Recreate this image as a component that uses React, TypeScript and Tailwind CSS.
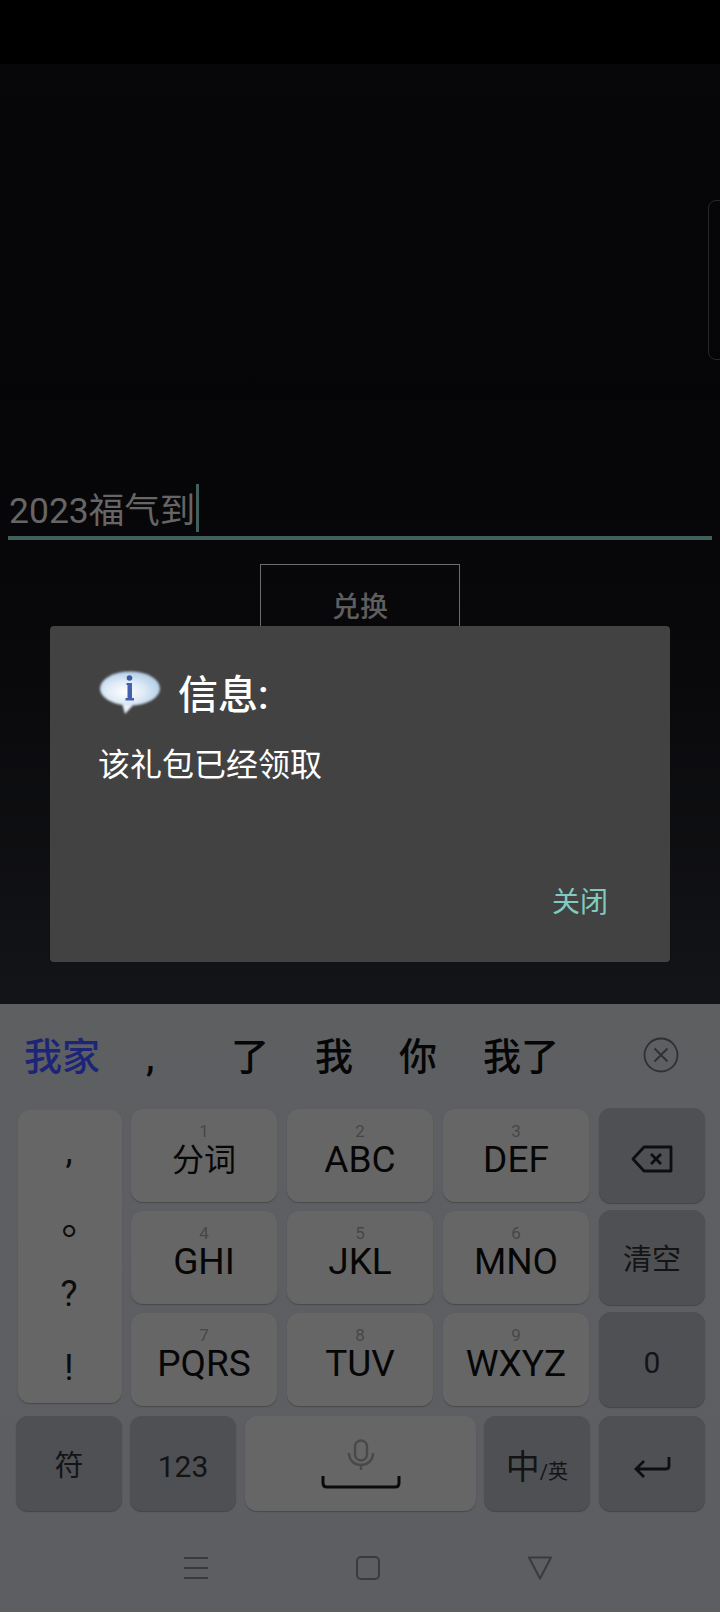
const F = "font-['Roboto','Noto_Sans_CJK_SC',sans-serif]";

function LetterKey({ n, label }: { n: string; label: string }) {
  return (
    <div className="flex h-[93px] flex-col items-center rounded-[12px] bg-[#666667] pt-[13px] shadow-[0_1px_1px_#48494c]">
      <span className="h-[20px] text-[17px] leading-[18px] text-[#474748]">{n}</span>
      <span className="text-[37px] leading-[36px] text-[#060606]">{label}</span>
    </div>
  );
}

function FnKey({ children, className = "w-[106px]" }: { children: React.ReactNode; className?: string }) {
  return (
    <div className={`flex h-[95px] items-center justify-center rounded-[12px] bg-[#4f5053] pt-[6px] text-[#141416] shadow-[0_1px_1px_#434448] ${className}`}>
      {children}
    </div>
  );
}

function InfoIcon() {
  return (
    <svg width="64" height="46" viewBox="0 0 64 46" className="shrink-0">
      <defs>
        <radialGradient id="bubble" cx="0.42" cy="0.6" r="0.7">
          <stop offset="0" stopColor="#ffffff" />
          <stop offset="0.45" stopColor="#dfeaf6" />
          <stop offset="0.85" stopColor="#b4cfe9" />
          <stop offset="1" stopColor="#e3ecf5" />
        </radialGradient>
        <filter id="soft" x="-10%" y="-10%" width="120%" height="120%">
          <feGaussianBlur stdDeviation="0.9" />
        </filter>
      </defs>
      <g filter="url(#soft)">
        <path d="M24 33 L27 44 L36 34 Z" fill="#eef3f9" />
        <ellipse cx="32" cy="18.500" rx="30" ry="17" fill="url(#bubble)" />
      </g>
      <circle cx="31.500" cy="8" r="2.800" fill="#3d5aa6" />
      <path d="M28.500 13 H34 V28 H36 V30.500 H27.500 V28 H29.500 V15 H28.500 Z" fill="#4460ad" />
    </svg>
  );
}

export default function App() {
  return (
    <div className={`${F} flex h-[1612px] w-[720px] flex-col overflow-hidden bg-black`}>
      <div className="h-[64px] shrink-0 bg-black" />

      <div className="relative h-[940px] shrink-0 bg-[linear-gradient(180deg,#07070a_0%,#050507_35%,#09090c_65%,#131417_100%)]">
        <div className="absolute right-[-14px] top-[136px] h-[160px] w-[26px] rounded-[8px] border border-[#24282b]" />

        <div className="mx-[8px] mt-[420px] flex h-[48px] items-center">
          <span className="pl-[1px] pt-[6px] text-[35.5px] leading-[48px] text-[#666666]">2023福气到</span>
          <span className="ml-[1px] h-[48px] w-[3px] bg-[#41605c]" />
        </div>
        <div className="mx-[8px] mt-[4px] h-[4px] bg-[#41605c]" />
        <div className="mx-auto mt-[24px] flex h-[84px] w-[200px] items-center justify-center border border-[#6c6c6c] pt-[4px] text-[28px] font-medium text-[#5e5e5e]">
          兑换
        </div>
      </div>

      <div className="absolute left-[50px] top-[626px] flex h-[336px] w-[620px] flex-col rounded-[4px] bg-[#424242] pl-[48px] pr-[62px] pt-[44px]">
        <div className="flex h-[46px] items-center">
          <InfoIcon />
          <span className="ml-[16px] pt-[6px] text-[40px] font-medium leading-[50px] text-white">信息:</span>
        </div>
        <div className="mt-[27px] text-[32px] leading-[44px] text-white">该礼包已经领取</div>
        <div className="mt-auto mb-[39px] self-end text-[28px] leading-[40px] text-[#80cbc0]">关闭</div>
      </div>

      <div className="flex h-[608px] shrink-0 flex-col bg-[linear-gradient(180deg,#5e5f61_0%,#5c5e62_100%)]">
        <div className="flex h-[105px] shrink-0 items-center whitespace-nowrap pt-[1px] pl-[24px] text-[38px] font-medium leading-[50px] text-[#060606]">
          <span className="w-[76px] text-[#1c2578]">我家</span>
          <span className="ml-[46px] w-[62px]">,</span>
          <span className="ml-[23px] w-[38px]">了</span>
          <span className="ml-[46px] w-[38px]">我</span>
          <span className="ml-[46px] w-[38px]">你</span>
          <span className="ml-[46px] w-[76px]">我了</span>
          <svg width="36" height="36" viewBox="0 0 36 36" className="ml-[84px] -mt-[5px]" fill="none" stroke="#2f3033" strokeWidth="1.800">
            <circle cx="18" cy="18" r="16.500" />
            <path d="M11.500 11.500 L24.500 24.500 M24.500 11.500 L11.500 24.500" />
          </svg>
        </div>

        <div className="flex h-[298px] shrink-0 pl-[18px]">
          <div className="mt-[1px] flex h-[293px] w-[104px] flex-col items-center rounded-[12px] bg-[#666667] pr-[2px] text-[36px] text-[#0c0c0c] shadow-[0_1px_1px_#48494c]">
            <span className="mt-[19px] h-[44px] leading-[44px]">,</span>
            <span className="mt-[30px] h-[52px] font-['Noto_Sans_CJK_TC'] text-[40px] leading-[52px]">。</span>
            <span className="mt-[17px] h-[44px] leading-[44px]">?</span>
            <span className="mt-[30px] h-[44px] leading-[44px]">!</span>
          </div>
          <div className="ml-[9px] grid grid-cols-[146px_146px_146px_106px] grid-rows-[93px_93px_94px] gap-x-[10px] gap-y-[9px]">
            <div className="flex h-[93px] flex-col items-center rounded-[12px] bg-[#666667] pt-[13px] shadow-[0_1px_1px_#48494c]">
              <span className="h-[19px] text-[17px] leading-[18px] text-[#474748]">1</span>
              <span className="text-[32px] leading-[38px] text-[#060606]">分词</span>
            </div>
            <LetterKey n="2" label="ABC" />
            <LetterKey n="3" label="DEF" />
            <FnKey className="-mt-[1px]">
              <svg width="42" height="28" viewBox="0 0 42 28" fill="none" stroke="#0e0e10" strokeWidth="2.800" strokeLinejoin="round">
                <path d="M40 2 H13 L2 14 L13 26 H40 Z" />
                <path d="M20 9 L30 19 M30 9 L20 19" />
              </svg>
            </FnKey>
            <LetterKey n="4" label="GHI" />
            <LetterKey n="5" label="JKL" />
            <LetterKey n="6" label="MNO" />
            <FnKey className="-mt-[1px]">
              <span className="text-[29px]">清空</span>
            </FnKey>
            <LetterKey n="7" label="PQRS" />
            <LetterKey n="8" label="TUV" />
            <LetterKey n="9" label="WXYZ" />
            <FnKey className="-mt-[1px]">
              <span className="text-[30px]">0</span>
            </FnKey>
          </div>
        </div>

        <div className="mt-[9px] flex h-[95px] shrink-0 pl-[16px]">
          <FnKey>
            <span className="text-[29px]">符</span>
          </FnKey>
          <FnKey className="ml-[8px] w-[106px]">
            <span className="text-[30px]">123</span>
          </FnKey>
          <div className="ml-[9px] flex h-[95px] w-[231px] flex-col items-center rounded-[12px] bg-[#666667] pt-[23px] shadow-[0_1px_1px_#48494c]">
            <svg width="28" height="32" viewBox="0 0 28 32" fill="none" stroke="#48494b" strokeWidth="2.400">
              <rect x="8" y="1.500" width="12" height="20" rx="6" />
              <path d="M2 14 C2 22 8 26 14 26 C20 26 26 22 26 14 M14 26 V31" />
            </svg>
            <svg width="80" height="13" viewBox="0 0 80 13" fill="none" stroke="#0a0a0b" strokeWidth="3" className="mt-[5px]">
              <path d="M2 0 V7 Q2 11 6 11 H74 Q78 11 78 7 V0" />
            </svg>
          </div>
          <FnKey className="ml-[8px] w-[106px]">
            <span className="flex items-baseline">
              <span className="text-[34px] leading-[40px]">中</span>
              <span className="text-[20px]">/英</span>
            </span>
          </FnKey>
          <FnKey className="ml-[9px] w-[106px]">
            <svg width="38" height="22" viewBox="0 0 38 22" fill="none" stroke="#0e0e10" strokeWidth="2.800">
              <path d="M36 1 V10 Q36 13 33 13 H3 M11 5 L3 13 L11 21" />
            </svg>
          </FnKey>
        </div>

        <div className="flex flex-1 items-start gap-[148px] pl-[184px] pt-[45px]">
          <svg width="24" height="24" viewBox="0 0 24 24" stroke="#3a3b3e" strokeWidth="2">
            <path d="M0 2 H24 M0 12 H24 M0 22 H24" />
          </svg>
          <svg width="24" height="24" viewBox="0 0 24 24" fill="none" stroke="#3a3b3e" strokeWidth="2">
            <rect x="1" y="1" width="22" height="22" rx="4" />
          </svg>
          <svg width="24" height="24" viewBox="0 0 24 24" fill="none" stroke="#3a3b3e" strokeWidth="2" strokeLinejoin="round">
            <path d="M1 1.500 H23 L12 22.500 Z" />
          </svg>
        </div>
      </div>
    </div>
  );
}
